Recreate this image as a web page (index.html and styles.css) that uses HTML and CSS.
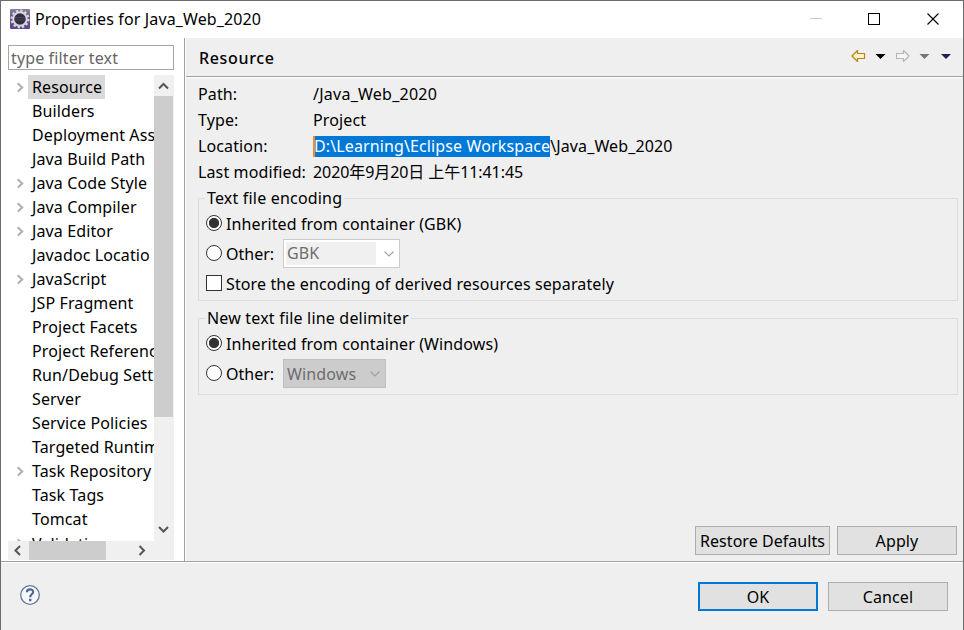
FILE: index.html
```html
<!DOCTYPE html>
<html lang="en">
<head>
<meta charset="utf-8">
<title>Properties for Java_Web_2020</title>
<link rel="stylesheet" href="styles.css">
</head>
<body>
<div class="window">
  <header class="titlebar">
    <svg class="app-icon" width="20" height="20" viewBox="0 0 20 20">
      <defs>
        <linearGradient id="tile" x1="0" y1="0" x2="0" y2="1"><stop offset="0" stop-color="#8a80a0"/><stop offset=".4" stop-color="#6a5494"/><stop offset="1" stop-color="#5d4688"/></linearGradient>
      </defs>
      <rect width="20" height="20" rx="1" fill="url(#tile)"/>
      <circle cx="10" cy="10" r="8.300" fill="none" stroke="#d9d5de" stroke-width="2.400" stroke-dasharray="2.300 2.045"/>
      <circle cx="10" cy="10" r="6.700" fill="#302e40" stroke="#d8d5dc" stroke-width="2"/>
      <path d="M5 8.500h10M4.500 11h11" stroke="#48465a"/>
    </svg>
    <h1 class="title">Properties for Java_Web_2020</h1>
    <svg class="win-controls" width="134" height="16" viewBox="0 0 134 16" fill="none">
      <path d="M0 7.500h12" stroke="#ccc"/>
      <rect x="58.500" y="2.500" width="11" height="11" stroke="#000"/>
      <path d="M117.500 2.500l11 11M128.500 2.500l-11 11" stroke="#000" stroke-width="1.100"/>
    </svg>
  </header>
  <main class="body">
    <aside class="side">
      <div class="filter">type filter text</div>
      <div class="tree-pane">
        <ul class="tree">
          <li class="node parent selected"><span>Resource</span></li>
          <li class="node"><span>Builders</span></li>
          <li class="node"><span>Deployment Ass</span></li>
          <li class="node"><span>Java Build Path</span></li>
          <li class="node parent"><span>Java Code Style</span></li>
          <li class="node parent"><span>Java Compiler</span></li>
          <li class="node parent"><span>Java Editor</span></li>
          <li class="node"><span>Javadoc Locatio</span></li>
          <li class="node parent"><span>JavaScript</span></li>
          <li class="node"><span>JSP Fragment</span></li>
          <li class="node"><span>Project Facets</span></li>
          <li class="node"><span>Project Referenc</span></li>
          <li class="node"><span>Run/Debug Sett</span></li>
          <li class="node"><span>Server</span></li>
          <li class="node"><span>Service Policies</span></li>
          <li class="node"><span>Targeted Runtim</span></li>
          <li class="node parent"><span>Task Repository</span></li>
          <li class="node"><span>Task Tags</span></li>
          <li class="node"><span>Tomcat</span></li>
          <li class="node parent"><span>Validation</span></li>
        </ul>
        <div class="vscroll">
          <svg width="20" height="21" viewBox="0 0 20 21"><path d="M5 13.500l4.500-4.500 4.500 4.500" class="arrow"/></svg>
          <div class="vthumb"></div>
          <svg class="down" width="20" height="21" viewBox="0 0 20 21"><path d="M5 7l4.500 4.500L14 7" class="arrow"/></svg>
        </div>
        <div class="hscroll">
          <svg width="21" height="19" viewBox="0 0 21 19"><path d="M12 5L7.500 9.500 12 14" class="arrow"/></svg>
          <div class="hthumb"></div>
          <svg class="right" width="21" height="19" viewBox="0 0 21 19"><path d="M6.500 5L11 9.500 6.500 14" class="arrow"/></svg>
        </div>
      </div>
    </aside>
    <section class="page">
      <div class="page-head">
        <h2>Resource</h2>
        <svg class="nav" width="102" height="14" viewBox="0 0 102 14">
          <path d="M.9 7L6.500 1.500V4.500H13.500V9.500H6.500V12.500Z" fill="#fff4c4" stroke="#c0801d" stroke-width="1.200" stroke-linejoin="round"/>
          <path d="M24.500 5h10l-5 5z" fill="#000"/>
          <path d="M58.100 7L52.500 1.500V4.500H45.500V9.500H52.500V12.500Z" fill="#f5f5f5" stroke="#b4b4b4" stroke-width="1.100" stroke-linejoin="round"/>
          <path d="M68.500 5h10l-5 5z" fill="#777"/>
          <path d="M90 5h10l-5 5z" fill="#2b1c55"/>
        </svg>
      </div>
      <div class="content">
        <dl class="info">
          <dt>Path:</dt><dd class="path">/Java_Web_2020</dd>
          <dt>Type:</dt><dd>Project</dd>
          <dt>Location:</dt><dd><span class="marked">D:\Learning\Eclipse Workspace</span>\Java_Web_2020</dd>
          <dt>Last modified:</dt><dd class="date">2020年9月20日 上午11:41:45</dd>
        </dl>
        <fieldset class="group">
          <legend>Text file encoding</legend>
          <div class="option"><i class="radio on"></i><span>Inherited from container (GBK)</span></div>
          <div class="option"><i class="radio"></i><span class="other">Other:</span>
            <div class="combo editable"><span class="field">GBK</span><svg width="12" height="8" viewBox="0 0 12 8"><path d="M1.500 1.500L6 6l4.500-4.500" class="chev"/></svg></div>
          </div>
          <div class="option"><i class="check"></i><span>Store the encoding of derived resources separately</span></div>
        </fieldset>
        <fieldset class="group second">
          <legend>New text file line delimiter</legend>
          <div class="option"><i class="radio on"></i><span>Inherited from container (Windows)</span></div>
          <div class="option"><i class="radio"></i><span class="other">Other:</span>
            <div class="combo solid"><span>Windows</span><svg width="12" height="8" viewBox="0 0 12 8"><path d="M1.500 1.500L6 6l4.500-4.500" class="chev"/></svg></div>
          </div>
        </fieldset>
        <div class="actions">
          <div class="btn wide">Restore Defaults</div>
          <div class="btn">Apply</div>
        </div>
      </div>
    </section>
  </main>
  <footer class="footer">
    <svg class="help" width="22" height="22" viewBox="0 0 22 22" fill="none">
      <circle cx="11" cy="11" r="9.300" fill="#f5f7fa" stroke="#64789c" stroke-width="1.300"/>
      <path d="M7.900 8.300C7.900 4.400 14.100 4.400 14.100 7.900C14.100 10.300 11.200 10.200 11.200 13.200" stroke="#53668e" stroke-width="2.200"/>
      <rect x="10" y="14.800" width="2.400" height="2.400" fill="#53668e"/>
    </svg>
    <div class="btn primary">OK</div>
    <div class="btn">Cancel</div>
  </footer>
</div>
</body>
</html>
```
FILE: styles.css
```css
*, *::before { box-sizing: border-box; }
body {
  margin: 0;
  font: 16px/24px "Noto Sans", "Noto Sans CJK SC", sans-serif;
  letter-spacing: .12px;
  color: #000;
}
h1, h2, ul, dl, dd { margin: 0; padding: 0; font-weight: 400; font-size: inherit; }
.window {
  width: 964px;
  height: 630px;
  display: flex;
  flex-direction: column;
  background: #efefef;
  border: 1px solid #6b6b6b;
  border-bottom: 0;
  overflow: hidden;
}
.titlebar {
  height: 37px;
  flex: none;
  display: flex;
  align-items: center;
  background: #fff;
  padding: 0 19px 1px 9px;
}
.title { margin-left: 5px; flex: 1; letter-spacing: .13px; }

.body { height: 523px; flex: none; display: flex; }
.side {
  width: 184px;
  flex: none;
  background: #fff;
  border-right: 1px solid #a0a0a0;
  padding: 7px 10px 0 7px;
}
.filter {
  height: 25px;
  border: 1px solid #a5a5a5;
  color: #666;
  line-height: 24px;
  padding-left: 2px;
  letter-spacing: .13px;
  white-space: nowrap;
}
.tree-pane {
  margin-top: 5px;
  display: grid;
  grid-template: 466px 19px / 146px 20px;
}
.tree { list-style: none; overflow: hidden; }
.node {
  height: 24px;
  display: flex;
  align-items: center;
  padding-left: 20px;
  white-space: nowrap;
}
.node span { padding: 0 4px; line-height: 24px; }
.node.selected span { background: #d9d9d9; padding-right: 3px; }
.node:last-child span { margin-top: 1px; }
.parent::before {
  content: "";
  flex: none;
  width: 7px;
  height: 7px;
  margin: 1px 6px 0 -13px;
  border: solid #b0b0b0;
  border-width: 2px 2px 0 0;
  transform: rotate(45deg);
}
.vscroll {
  grid-area: 1 / 2;
  display: flex;
  flex-direction: column;
  background: #f0f0f0;
}
.vthumb { height: 321px; background: #cdcdcd; margin-right: 1px; }
.down { margin-top: auto; }
.hscroll { grid-area: 2 / 1 / 3 / 3; display: flex; background: #f0f0f0; }
.hthumb { width: 77px; background: #cdcdcd; }
.right { margin-left: 27px; }
.arrow { fill: none; stroke: #555; stroke-width: 2; }

.page { flex: 1; display: flex; flex-direction: column; border-left: 1px solid #fff; }
.page-head {
  height: 39px;
  flex: none;
  display: flex;
  align-items: center;
  justify-content: space-between;
  padding: 0 10px 0 13px;
  border-bottom: 1px solid #a0a0a0;
  box-shadow: 0 1px #fff;
}
.page-head h2 { font-weight: 500; letter-spacing: .65px; padding-top: 2px; }
.nav { margin-bottom: 3px; }
.content { flex: 1; display: flex; flex-direction: column; padding: 5px 5px 6px 12px; }
.info {
  display: grid;
  grid-template-columns: 115px 1fr;
  grid-auto-rows: 26px;
  line-height: 25px;
  white-space: nowrap;
}
.path { letter-spacing: .25px; }
.date { letter-spacing: -.08px; }
.marked {
  display: inline-block;
  height: 21px;
  line-height: 21px;
  background: #0078d7;
  color: #fff;
  box-shadow: inset 2px 0 #ff8728;
  padding-left: 1px;
}
.group {
  margin: 0;
  padding: 0 0 0 7px;
  border: 1px solid #dcdcdc;
  height: 115px;
  min-width: 0;
}
.group legend { padding: 0 2px; margin-left: -1px; height: 24px; line-height: 24px; letter-spacing: .19px; }
.group.second { height: 89px; margin-top: 5px; }
.option { height: 30px; display: flex; align-items: center; white-space: nowrap; position: relative; top: -1px; }
.radio, .check { width: 16px; height: 16px; flex: none; margin: -2px 4px 0 0; background: #fff; border: 1px solid #333; }
.radio { border-radius: 50%; }
.radio.on { background: radial-gradient(circle, #333 4.7px, #fff 5.5px); }
.other { width: 57px; letter-spacing: 0; }
.combo { display: flex; align-items: center; color: #6d6d6d; height: 29px; margin-top: -1px; }
.editable { width: 117px; background: #fff; border: 1px solid #ccc; padding: 0 4px 0 2px; justify-content: space-between; }
.field { width: 90px; height: 23px; line-height: 23px; background: #f0f0f0; padding-left: 1px; }
.solid { width: 103px; background: #ccc; border: 1px solid #bfbfbf; padding: 0 4px 0 3px; justify-content: space-between; }
.chev { fill: none; stroke: #a0a0a0; stroke-width: 1.1; }
.actions { margin: auto 1px 0 0; display: flex; justify-content: flex-end; gap: 7px; }
.btn {
  width: 120px;
  height: 29px;
  border: 1px solid #adadad;
  background: #e1e1e1;
  text-align: center;
  line-height: 28px;
  white-space: nowrap;
}
.btn.wide { width: 135px; letter-spacing: .04px; }
.btn.primary { border: 2px solid #0078d7; line-height: 26px; }
.footer {
  flex: 1;
  display: flex;
  align-items: center;
  gap: 10px;
  padding: 1px 15px 0 18px;
  border-top: 1px solid #a0a0a0;
  box-shadow: inset 0 1px #fff;
}
.help { margin: 0 auto 3px 0; }
```
